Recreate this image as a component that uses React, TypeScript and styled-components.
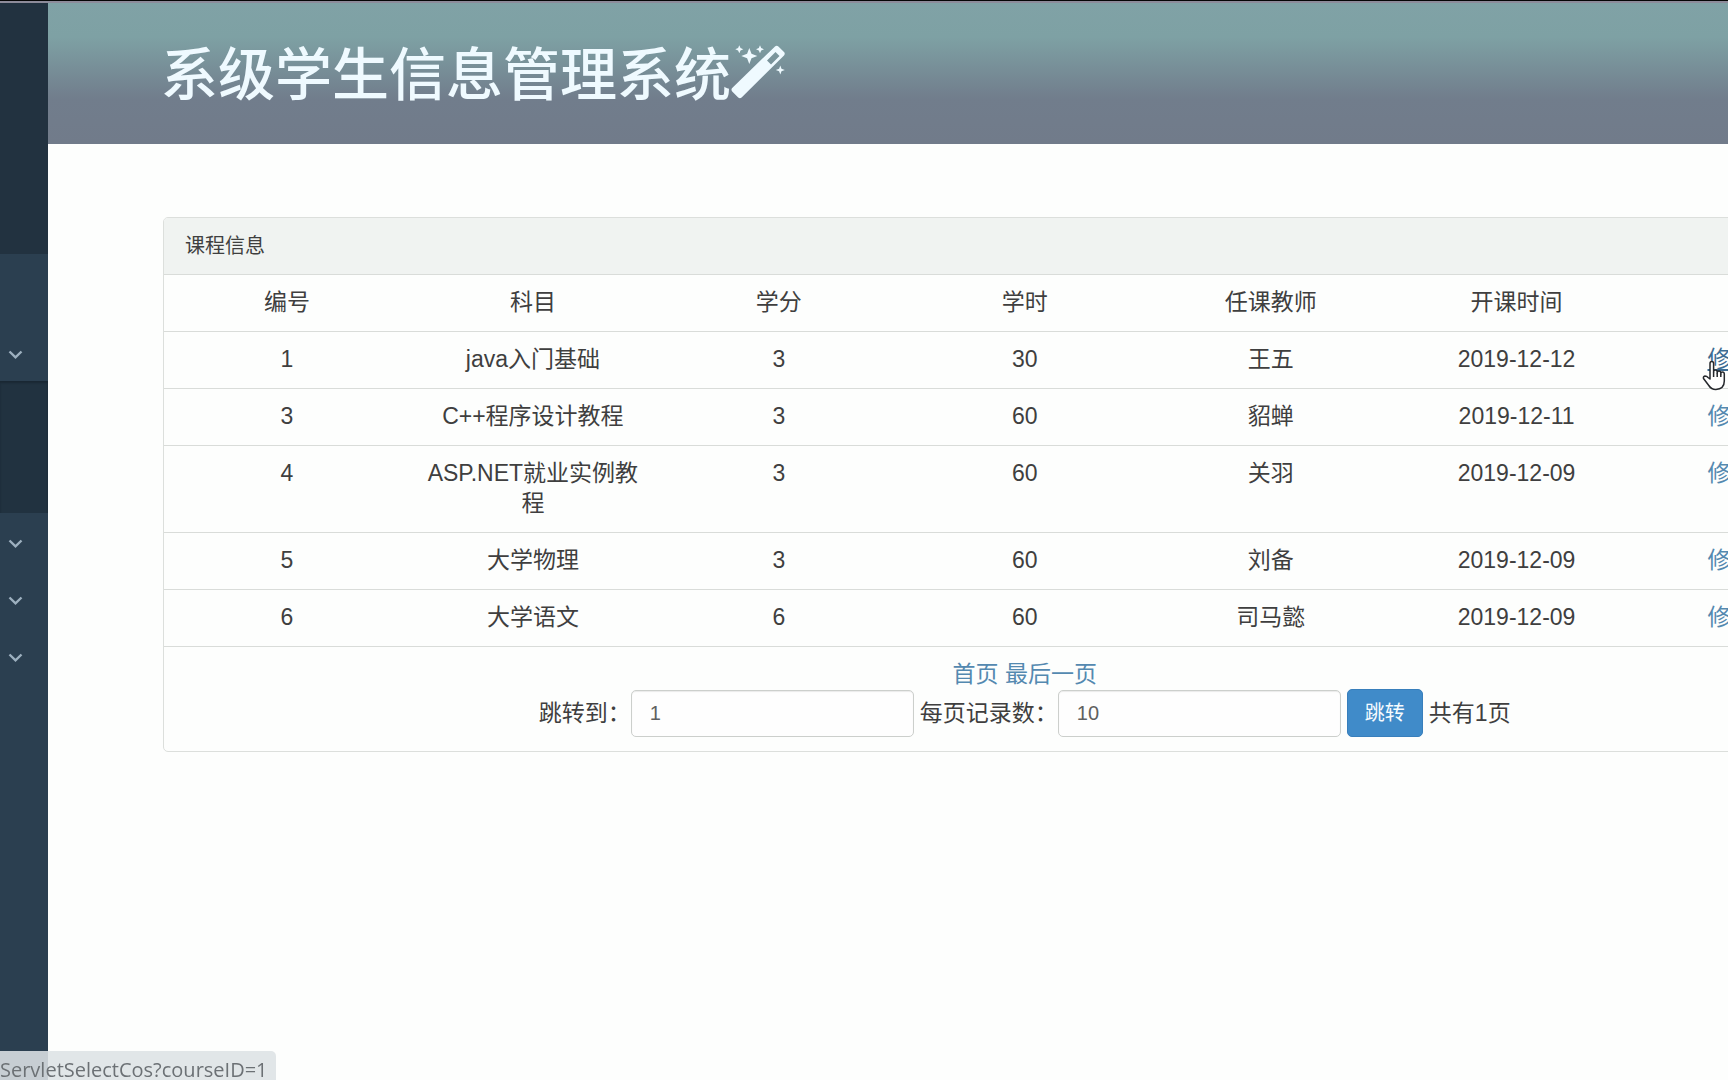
import React from "react";
import styled, { createGlobalStyle } from "styled-components";

const GlobalStyle = createGlobalStyle`
  *, *::before, *::after { box-sizing: border-box; }
  body {
    margin: 0;
    background: #fdfefd;
    color: #3f3f3f;
    font-family: "Liberation Sans", "Noto Sans CJK SC", sans-serif;
    font-size: 23px;
    line-height: 30px;
    overflow-x: hidden;
  }
`;

const Page = styled.div`
  display: flex;
  flex-direction: column;
  min-height: 100vh;
  overflow: hidden;
`;

const TopEdge = styled.div`
  height: 3px;
  border-top: 1px solid #050505;
  background: #8d8b9a;
`;

const Body = styled.div`
  display: flex;
  flex: 1;
`;

const Sidebar = styled.nav`
  flex: 0 0 48px;
  background: #2b3f50;
`;

const Profile = styled.div`
  height: 251px;
  background: #223240;
`;

const Submenu = styled.div`
  height: 132px;
  background: #213240;
  box-shadow: inset 0 2px 2px #1a2833;
`;

const Toggle = styled.button<{ $first?: boolean }>`
  display: flex;
  align-items: center;
  width: 100%;
  height: 57px;
  margin-top: ${(p) => (p.$first ? "70px" : "0")};
  padding: 4px 0 0 8px;
  border: 0;
  background: transparent;
  color: #9db0bf;
  cursor: pointer;
`;

const Main = styled.main`
  flex: 1;
  min-width: 0;
`;

const Header = styled.header`
  display: flex;
  align-items: center;
  height: 141px;
  padding: 2px 113px 0;
  background: linear-gradient(#80a2a6 0, #7ea1a4 24%, #717d8c 68%, #717b8a 100%);
  color: #effaff;
`;

const Title = styled.h1`
  display: flex;
  align-items: center;
  margin: 0;
  font-size: 57px;
  font-weight: 500;
  line-height: 80px;
  white-space: nowrap;
`;

const Content = styled.section`
  padding: 73px 0 0 115px;
`;

const Panel = styled.div`
  width: calc(110% + 2px);
  border: 1px solid #dcdfdc;
  border-radius: 5px;
  overflow: hidden;
`;

const PanelTitle = styled.h2`
  margin: 0;
  padding: 13px 21px;
  background: #f0f3f1;
  font-size: 20px;
  font-weight: 400;
  line-height: 30px;
`;

const Table = styled.table`
  width: 100%;
  table-layout: fixed;
  border-collapse: collapse;
  text-align: center;
`;

const cellStyle = `
  padding: 12px 15px 14px;
  border-top: 1px solid #d9dcd9;
  font-weight: 400;
  vertical-align: top;
`;

const HeadCell = styled.th`${cellStyle}`;
const Cell = styled.td`${cellStyle}`;

const Link = styled.a<{ $hovered?: boolean }>`
  color: ${(p) => (p.$hovered ? "#3c6c93" : "#5489b0")};
  text-decoration: ${(p) => (p.$hovered ? "underline" : "none")};
`;

const Actions = styled.div`
  display: flex;
  justify-content: center;
  gap: 18px;
`;

const Pager = styled.form`
  display: flex;
  align-items: center;
  justify-content: center;
  gap: 6px;
`;

const Field = styled.label`
  display: flex;
  align-items: center;
  white-space: nowrap;
`;

const Input = styled.input`
  width: 283px;
  height: 47px;
  padding: 0 18px;
  border: 1px solid #cccfcc;
  border-radius: 5px;
  background: #fefefe;
  box-shadow: inset 0 1px 1px rgba(0, 0, 0, 0.08);
  color: #606060;
  font: inherit;
  font-size: 20px;
`;

const Submit = styled.button`
  height: 48px;
  padding: 0 17px;
  border: 1px solid #387fbc;
  border-radius: 5px;
  background: #408bc9;
  color: #f5fbff;
  font: inherit;
  font-size: 20px;
  cursor: pointer;
`;

const Status = styled.div`
  position: fixed;
  left: 0;
  bottom: 0;
  height: 29px;
  padding: 4px 8px 0 0;
  border-radius: 0 5px 0 0;
  background: rgba(221, 226, 229, 0.88);
  color: #6c7175;
  font-family: "Open Sans", sans-serif;
  font-size: 20px;
  line-height: 30px;
`;

const Pointer = styled.svg`
  position: absolute;
  top: 360px;
  left: 1702px;
  pointer-events: none;
`;

const Chevron = () => (
  <svg width="15" height="10" viewBox="0 0 15 10" fill="none" stroke="currentColor" strokeWidth="2.4">
    <path d="M1.5 1.5 7.5 7.3 13.5 1.5" />
  </svg>
);

const Wand = () => (
  <svg width="54" height="62" viewBox="0 0 54 62" fill="currentColor">
    <path
      fillRule="evenodd"
      d="M1.200 44 44 2.400q1.700-1.500 3.400 0l5.600 5.600q1.500 1.700 0 3.400L10.600 53.400q-1.700 1.500-3.400 0L1.200 47.400q-1.500-1.700 0-3.400ZM36 16.500l4 4 8.500-8.500-4-4Z"
    />
    <path d="m18.300 4 2.200 5.800 5.800 2.200-5.800 2.200-2.200 5.800-2.200-5.800-5.800-2.200 5.800-2.200ZM8.300 1.300l1.200 2.800 2.800 1.200-2.800 1.200-1.200 2.800-1.200-2.800-2.800-1.200 2.800-1.200ZM29 1.300l1.200 2.800L33 5.300l-2.800 1.200L29 9.300l-1.200-2.800L25 5.300l2.800-1.200ZM49.300 21.500l1.200 3.300 3.300 1.200-3.300 1.200-1.200 3.300-1.200-3.300-3.300-1.200 3.300-1.200Z" />
  </svg>
);

const columns = ["编号", "科目", "学分", "学时", "任课教师", "开课时间", "操作"];

const courses = [
  { id: 1, subject: "java入门基础", credit: 3, hours: 30, teacher: "王五", date: "2019-12-12" },
  { id: 3, subject: "C++程序设计教程", credit: 3, hours: 60, teacher: "貂蝉", date: "2019-12-11" },
  { id: 4, subject: "ASP.NET就业实例教程", credit: 3, hours: 60, teacher: "关羽", date: "2019-12-09" },
  { id: 5, subject: "大学物理", credit: 3, hours: 60, teacher: "刘备", date: "2019-12-09" },
  { id: 6, subject: "大学语文", credit: 6, hours: 60, teacher: "司马懿", date: "2019-12-09" },
];

export default function App() {
  return (
    <Page lang="zh-CN">
      <GlobalStyle />
      <TopEdge />
      <Body>
        <Sidebar>
          <Profile />
          <Toggle $first type="button"><Chevron /></Toggle>
          <Submenu />
          <Toggle type="button"><Chevron /></Toggle>
          <Toggle type="button"><Chevron /></Toggle>
          <Toggle type="button"><Chevron /></Toggle>
        </Sidebar>
        <Main>
          <Header>
            <Title>系级学生信息管理系统<Wand /></Title>
          </Header>
          <Content>
            <Panel>
              <PanelTitle>课程信息</PanelTitle>
              <Table>
                <thead>
                  <tr>{columns.map((c) => <HeadCell key={c} scope="col">{c}</HeadCell>)}</tr>
                </thead>
                <tbody>
                  {courses.map((c) => (
                    <tr key={c.id}>
                      <Cell>{c.id}</Cell>
                      <Cell>{c.subject}</Cell>
                      <Cell>{c.credit}</Cell>
                      <Cell>{c.hours}</Cell>
                      <Cell>{c.teacher}</Cell>
                      <Cell>{c.date}</Cell>
                      <Cell>
                        <Actions>
                          <Link href="#edit" $hovered={c.id === 1}>修改</Link>
                          <Link href="#delete">删除</Link>
                        </Actions>
                      </Cell>
                    </tr>
                  ))}
                </tbody>
                <tfoot>
                  <tr>
                    <Cell colSpan={7}>
                      <Link href="#first">首页</Link> <Link href="#last">最后一页</Link>
                      <Pager onSubmit={(e) => e.preventDefault()}>
                        <Field>跳转到：<Input name="page" defaultValue="1" /></Field>
                        <Field>每页记录数：<Input name="size" defaultValue="10" /></Field>
                        <Submit type="submit">跳转</Submit>
                        <span>共有1页</span>
                      </Pager>
                    </Cell>
                  </tr>
                </tfoot>
              </Table>
            </Panel>
          </Content>
        </Main>
      </Body>
      <Status>ServletSelectCos?courseID=1</Status>
      <Pointer width="24" height="31" viewBox="0 0 24 31" fill="#fff" stroke="#25282c" strokeWidth="1.500" strokeLinejoin="round">
        <path d="M8 19V3.500Q8 1.500 9.800 1.500T11.600 3.500V12q0-2 1.800-2t1.800 2v1q0-2 1.800-2t1.800 2v1q0-2 1.700-2t1.800 2v7q0 8-8.500 8.500-4.500 0-7-4L1.500 18.500Q1 16.500 3 16q1.800 0 3 1.500Z" />
        <path d="M11.600 12v5M15.200 13v4M18.800 14v3" fill="none" />
      </Pointer>
    </Page>
  );
}
